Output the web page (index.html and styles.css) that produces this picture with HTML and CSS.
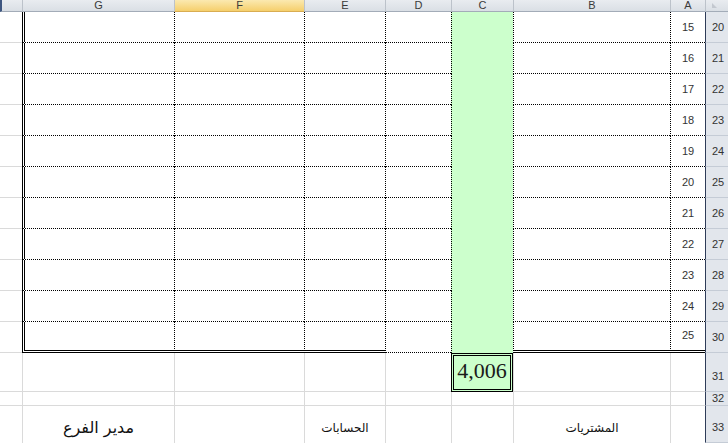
FILE: index.html
```html
<!DOCTYPE html>
<html lang="ar">
<head>
    <meta charset="UTF-8">
    <meta name="viewport" content="width=device-width, initial-scale=1.0">
    <title>كشف المشتريات</title>
    <link rel="stylesheet" href="styles.css">
</head>
<body>
    <!-- Sheet is right-to-left: row numbers on the right, column A first -->
    <div class="sheet">
        <!-- Column headers -->
        <div class="corner"></div>
        <div class="ch">A</div>
        <div class="ch">B</div>
        <div class="ch">C</div>
        <div class="ch">D</div>
        <div class="ch">E</div>
        <div class="ch ch-sel">F</div>
        <div class="ch">G</div>
        <div class="ch ch-edge"></div>

        <!-- Rows 20 - 30: numbered entries -->
        <div class="rh">20</div>
        <div class="c dot num">15</div><div class="c dot"></div><div class="c green"></div><div class="c dot"></div>
        <div class="c dot"></div><div class="c dot"></div><div class="c dot outer"></div><div class="c off"></div>

        <div class="rh">21</div>
        <div class="c dot num">16</div><div class="c dot"></div><div class="c green"></div><div class="c dot"></div>
        <div class="c dot"></div><div class="c dot"></div><div class="c dot outer"></div><div class="c off"></div>

        <div class="rh">22</div>
        <div class="c dot num">17</div><div class="c dot"></div><div class="c green"></div><div class="c dot"></div>
        <div class="c dot"></div><div class="c dot"></div><div class="c dot outer"></div><div class="c off"></div>

        <div class="rh">23</div>
        <div class="c dot num">18</div><div class="c dot"></div><div class="c green"></div><div class="c dot"></div>
        <div class="c dot"></div><div class="c dot"></div><div class="c dot outer"></div><div class="c off"></div>

        <div class="rh">24</div>
        <div class="c dot num">19</div><div class="c dot"></div><div class="c green"></div><div class="c dot"></div>
        <div class="c dot"></div><div class="c dot"></div><div class="c dot outer"></div><div class="c off"></div>

        <div class="rh">25</div>
        <div class="c dot num">20</div><div class="c dot"></div><div class="c green"></div><div class="c dot"></div>
        <div class="c dot"></div><div class="c dot"></div><div class="c dot outer"></div><div class="c off"></div>

        <div class="rh">26</div>
        <div class="c dot num">21</div><div class="c dot"></div><div class="c green"></div><div class="c dot"></div>
        <div class="c dot"></div><div class="c dot"></div><div class="c dot outer"></div><div class="c off"></div>

        <div class="rh">27</div>
        <div class="c dot num">22</div><div class="c dot"></div><div class="c green"></div><div class="c dot"></div>
        <div class="c dot"></div><div class="c dot"></div><div class="c dot outer"></div><div class="c off"></div>

        <div class="rh">28</div>
        <div class="c dot num">23</div><div class="c dot"></div><div class="c green"></div><div class="c dot"></div>
        <div class="c dot"></div><div class="c dot"></div><div class="c dot outer"></div><div class="c off"></div>

        <div class="rh">29</div>
        <div class="c dot num">24</div><div class="c dot"></div><div class="c green"></div><div class="c dot"></div>
        <div class="c dot"></div><div class="c dot"></div><div class="c dot outer"></div><div class="c off"></div>

        <div class="rh">30</div>
        <div class="c dot last num">25</div><div class="c dot last"></div><div class="c green"></div><div class="c dot"></div>
        <div class="c dot last"></div><div class="c dot last"></div><div class="c dot outer last"></div><div class="c off"></div>

        <!-- Row 31: total -->
        <div class="rh">31</div>
        <div class="c grid"></div><div class="c grid"></div><div class="c total">4,006</div><div class="c grid"></div>
        <div class="c grid"></div><div class="c grid"></div><div class="c grid"></div><div class="c off"></div>

        <div class="rh rh-thin">32</div>
        <div class="c grid"></div><div class="c grid"></div><div class="c grid"></div><div class="c grid"></div>
        <div class="c grid"></div><div class="c grid"></div><div class="c grid"></div><div class="c off"></div>

        <!-- Row 33: signatures -->
        <div class="rh">33</div>
        <div class="c grid open"></div>
        <div class="c grid open label">المشتريات</div>
        <div class="c grid open"></div>
        <div class="c grid open"></div>
        <div class="c grid open label">الحسابات</div>
        <div class="c grid open"></div>
        <div class="c grid open label label-lg">مدير الفرع</div>
        <div class="c"></div>
    </div>
</body>
</html>
```

FILE: styles.css
```css
body {
    margin: 0;
    background-color: #FFFFFF;
    font-family: 'Liberation Sans', Arial, sans-serif;
    overflow: hidden;
}

.sheet {
    display: grid;
    direction: rtl;
    grid-template-columns: 23px 35px 157px 62px 66px 81px 130px 152px 22px;
    grid-template-rows: 12px repeat(11, 31px) 39px 14px 37px;
    width: 728px;
    height: 443px;
    overflow: hidden;
}

.sheet > div {
    box-sizing: border-box;
    min-width: 0;
}

/* Headers */
.corner {
    position: relative;
    background: linear-gradient(#e9ecf0, #dadfe5);
    border-left: 1px solid #bcc2ca;
    border-bottom: 1px solid #a3acb8;
}

.corner::after {
    content: "";
    position: absolute;
    left: 6px;
    top: 3px;
    width: 0;
    height: 0;
    border-bottom: 5px solid #c3c8cf;
    border-right: 5px solid transparent;
}

.ch {
    background: linear-gradient(#e9ecf0, #dadfe5);
    border-left: 1px solid #bcc2ca;
    border-bottom: 1px solid #a3acb8;
    color: #3a3a3a;
    font-size: 11px;
    line-height: 10px;
    text-align: center;
    overflow: hidden;
}

.ch-sel {
    background: linear-gradient(#fbe9b0, #f5cf6c);
    border-bottom-color: #d9ad52;
}

.ch-edge {
    border-left: 2px solid #3e5680;
}

.rh {
    display: flex;
    align-items: flex-end;
    justify-content: center;
    padding: 0 0 9px 2px;
    background-color: #e2e6ec;
    border-left: 1px solid #2e3c58;
    border-bottom: 1px solid #c5ccd6;
    color: #333;
    font-size: 11px;
    line-height: 11px;
}

.rh-thin {
    padding-bottom: 1px;
}

/* Cells */
.c {
    display: flex;
    align-items: flex-end;
    justify-content: center;
    padding-bottom: 9px;
    color: #333;
    font-size: 11px;
    line-height: 11px;
}

.dot {
    border-left: 1px dotted #000;
    border-bottom: 1px dotted #000;
}

.outer {
    border-left: 3px double #000;
}

.last {
    border-bottom: 3px double #000;
}

.green {
    background-color: #ccffcc;
    border-left: 1px dotted #000;
}

.off {
    border-bottom: 1px solid #dadada;
}

.grid {
    border-left: 1px solid #dadada;
    border-bottom: 1px solid #dadada;
}

.open {
    border-bottom: none;
}

.total {
    align-items: flex-start;
    padding: 4px 0 0;
    background-color: #ccffcc;
    border: 3px double #000;
    color: #1a1a1a;
    font-family: 'Liberation Serif', 'Times New Roman', serif;
    font-size: 22px;
    line-height: 22px;
}

.label {
    align-items: center;
    padding: 7px 0 0;
    color: #111;
    font-family: 'DejaVu Sans', sans-serif;
    font-size: 12px;
    line-height: 20px;
}

.label-lg {
    font-size: 16px;
}
```
